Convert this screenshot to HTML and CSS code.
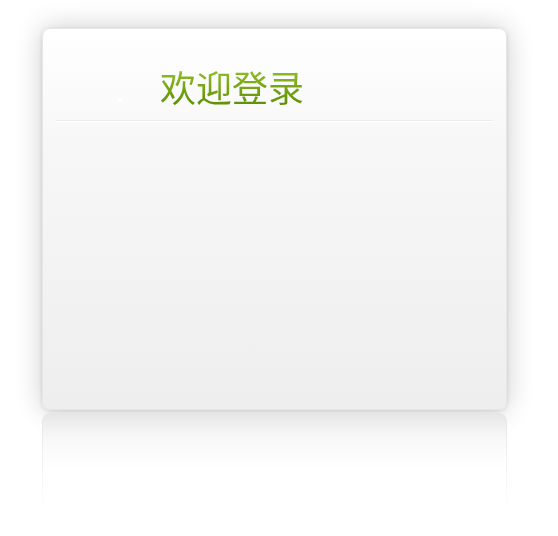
FILE: index.html
```html
<!DOCTYPE html>
<html lang="zh">
<head>
<meta charset="utf-8">
<link rel="stylesheet" href="styles.css">
</head>
<body>
<div class="stage">
  <div class="card">
    <div class="head">
      <svg class="mark" width="10" height="8" viewBox="0 0 10 8"><path d="M1 1 L5 7 L9 1 L5 3 Z" fill="#ffffff"/></svg>
      <h1 class="title">欢迎登录</h1>
    </div>
    <div class="divider"></div>
  </div>
  <div class="reflection"></div>
</div>
</body>
</html>
```
FILE: styles.css
```css
html, body {
  margin: 0;
  padding: 0;
  background: #ffffff;
}
body {
  width: 558px;
  height: 536px;
  overflow: hidden;
  font-family: "Noto Sans CJK SC", "Noto Sans", sans-serif;
}
.stage {
  padding: 28px 0 0 42px;
  display: flex;
  flex-direction: column;
}
.card {
  width: 465px;
  height: 382px;
  box-sizing: border-box;
  border-radius: 8px;
  border: 1px solid #e6e6e6;
  background: linear-gradient(#ffffff 0%, #f7f7f7 30%, #eeeeee 100%);
  box-shadow: 0 0 28px rgba(0,0,0,0.2), 0 1px 4px rgba(0,0,0,0.12);
  display: flex;
  flex-direction: column;
}
.head {
  height: 91px;
  display: flex;
  align-items: flex-end;
  padding-left: 72px;
  box-sizing: border-box;
}
.mark {
  margin: 0 35px 16px 0;
}
.title {
  margin: 0 0 11px 0;
  font-size: 36px;
  font-weight: normal;
  line-height: 46px;
  letter-spacing: 0;
  background: linear-gradient(#9cc533 0%, #78a814 50%, #5a8a03 100%);
  -webkit-background-clip: text;
  background-clip: text;
  color: transparent;
}
.divider {
  margin: 0 13px;
  height: 1px;
  background: #ececec;
  border-bottom: 1px solid #ffffff;
}
.reflection {
  margin-top: 3px;
  width: 465px;
  height: 100px;
  box-sizing: border-box;
  border-radius: 8px 8px 0 0;
  border: 1px solid #e6e6e6;
  border-bottom: none;
  background: linear-gradient(#e6e6e6 0%, #f5f5f5 25%, #ffffff 60%);
  -webkit-mask-image: linear-gradient(rgba(0,0,0,1) 0%, rgba(0,0,0,0.5) 50%, rgba(0,0,0,0) 100%);
  mask-image: linear-gradient(rgba(0,0,0,1) 0%, rgba(0,0,0,0.5) 50%, rgba(0,0,0,0) 100%);
}
```
